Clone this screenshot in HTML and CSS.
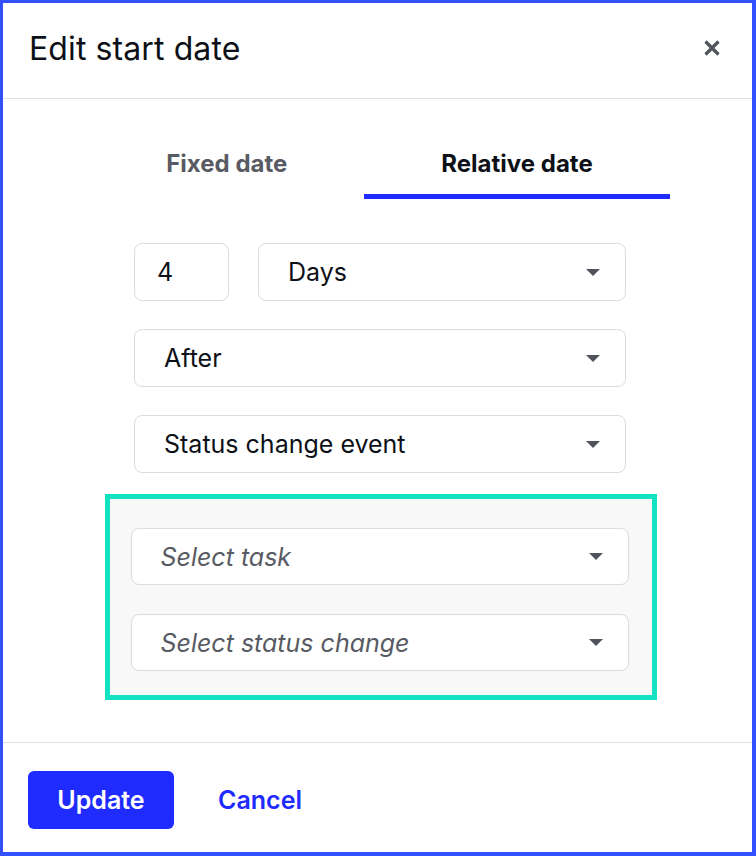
FILE: index.html
```html
<!DOCTYPE html>
<html lang="en">
<head>
<meta charset="utf-8">
<title>Edit start date</title>
<link rel="stylesheet" href="styles.css">
</head>
<body>
<div class="dialog">
  <header class="dialog-header">
    <h1 class="dialog-title">Edit start date</h1>
    <button class="close-btn" aria-label="Close">
      <svg width="18" height="18" viewBox="0 0 18 18"><path d="M2.5 2.5 L15.5 15.5 M15.5 2.5 L2.5 15.5" stroke="#50535b" stroke-width="3.2" stroke-linecap="butt" fill="none"/></svg>
    </button>
  </header>
  <main class="dialog-body">
    <nav class="tabs">
      <div class="tab">Fixed date</div>
      <div class="tab tab-active">Relative date</div>
    </nav>
    <div class="form">
      <div class="row">
        <div class="field field-number">4</div>
        <div class="field field-select grow"><span>Days</span><span class="caret"></span></div>
      </div>
      <div class="field field-select"><span>After</span><span class="caret"></span></div>
      <div class="field field-select"><span>Status change event</span><span class="caret"></span></div>
    </div>
    <div class="event-box">
      <div class="field field-select placeholder"><span>Select task</span><span class="caret"></span></div>
      <div class="field field-select placeholder"><span>Select status change</span><span class="caret"></span></div>
    </div>
  </main>
  <footer class="dialog-footer">
    <button class="btn-primary">Update</button>
    <button class="btn-link">Cancel</button>
  </footer>
</div>
</body>
</html>
```

FILE: styles.css
```css
* { box-sizing: border-box; }
html, body { margin: 0; padding: 0; background: #ffffff; }
body { font-family: Inter, "Noto Sans", "Liberation Sans", sans-serif; color: #0d1117; }

.dialog {
  width: 756px;
  height: 856px;
  border-style: solid;
  border-color: #3350ff;
  border-width: 3px 4px 4px 3px;
  display: flex;
  flex-direction: column;
  background: #fff;
}

.dialog-header {
  height: 96px;
  border-bottom: 1px solid #e0e0e0;
  display: flex;
  align-items: center;
  justify-content: space-between;
  padding: 0 31px 5px 26px;
}
.dialog-title {
  margin: 0;
  font-size: 32px;
  font-weight: 400;
  letter-spacing: 0.1px;
  color: #0d1117;
}
.close-btn {
  border: 0;
  background: none;
  padding: 0;
  width: 18px;
  height: 18px;
  display: flex;
  cursor: pointer;
}

.dialog-body {
  flex: 1;
  display: flex;
  flex-direction: column;
  align-items: center;
  padding-top: 50px;
  border-bottom: 1px solid #e0e0e0;
}

.tabs {
  display: flex;
  margin-left: 4px;
}
.tab {
  font-size: 24px;
  font-weight: 700;
  line-height: 29px;
  color: #585b63;
  padding: 0 77px 16px;
  border-bottom: 5px solid transparent;
}
.tab-active {
  color: #0d1117;
  border-bottom-color: #1f2bff;
}

.form {
  width: 492px;
  margin-top: 44px;
  margin-left: 5px;
  display: flex;
  flex-direction: column;
  gap: 28px;
}
.row {
  display: flex;
  gap: 29px;
}
.grow { flex: 1; }

.field {
  height: 58px;
  border: 1px solid #dcdcdc;
  border-radius: 8px;
  background: #fff;
  font-size: 25px;
  color: #0d1117;
  display: flex;
  align-items: center;
}
.field-number {
  width: 95px;
  padding-left: 22px;
}
.field-select {
  justify-content: space-between;
  padding: 0 25px 0 29px;
}
.caret {
  width: 0;
  height: 0;
  border-left: 7px solid transparent;
  border-right: 7px solid transparent;
  border-top: 7px solid #50535b;
}
.placeholder {
  font-style: italic;
  color: #585b63;
}

.event-box {
  width: 552px;
  margin-top: 21px;
  margin-left: 6px;
  border: 5px solid #10e2c2;
  background: #f8f8f8;
  padding: 29px 23px 24px 21px;
  display: flex;
  flex-direction: column;
  gap: 29px;
}
.event-box .field { height: 57px; }

.dialog-footer {
  height: 109px;
  display: flex;
  align-items: flex-start;
  padding: 28px 25px 0;
  gap: 44px;
}
.btn-primary {
  height: 58px;
  width: 146px;
  border: 0;
  border-radius: 6px;
  background: #1f2bff;
  color: #fff;
  font-family: inherit;
  font-size: 25px;
  font-weight: 600;
  cursor: pointer;
}
.btn-link {
  height: 58px;
  border: 0;
  background: none;
  padding: 0;
  color: #1f2bff;
  font-family: inherit;
  font-size: 25px;
  font-weight: 600;
  cursor: pointer;
}
```
